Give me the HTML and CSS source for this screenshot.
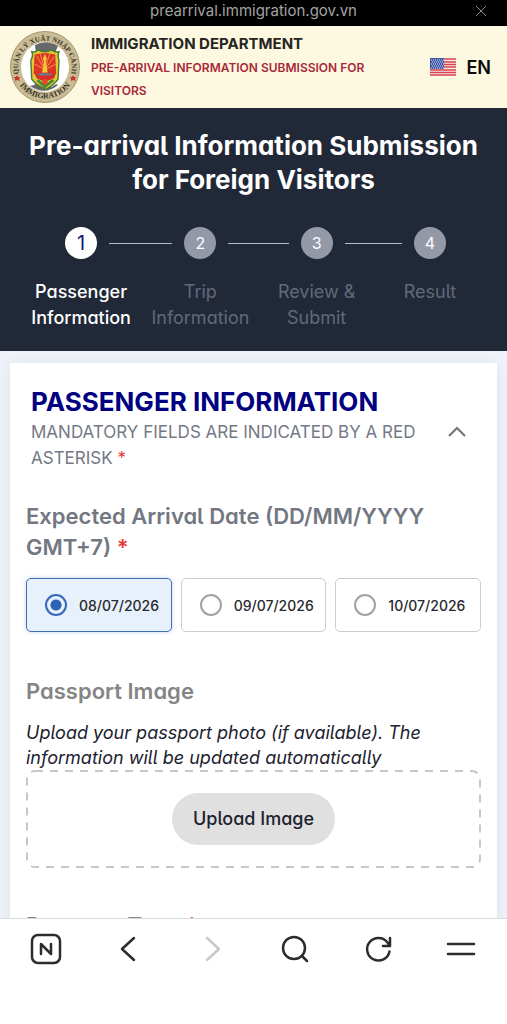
FILE: index.html
```
<!DOCTYPE html>
<html lang="en">
<head>
    <meta charset="UTF-8">
    <meta name="viewport" content="width=device-width, initial-scale=1.0">
    <title>Pre-arrival Information Submission</title>
    <link rel="stylesheet" href="styles.css">
</head>
<body>
    <div class="address-bar">
        <span class="address">prearrival.immigration.gov.vn</span>
        <button class="close" type="button" aria-label="Close">
            <svg width="12" height="12" viewBox="0 0 12 12"><path d="M1 1l10 10M11 1L1 11"/></svg>
        </button>
    </div>

    <div class="page">
        <header class="site-header">
            <svg class="logo" viewBox="0 0 70 72" role="img" aria-label="Immigration emblem">
                <defs>
                    <path id="arc-top" d="M10.500 48A27 27 0 1 1 59.500 48"/>
                    <path id="arc-bottom" d="M4.500 42A31 31 0 0 0 65.500 42"/>
                </defs>
                <ellipse cx="35" cy="36" rx="34.500" ry="35.500" fill="#c9bb93" stroke="#a3976f" stroke-width="1"/>
                <ellipse cx="35" cy="36" rx="24" ry="25" fill="#fff"/>
                <path d="M25 14Q36 8 48 15L44 24Q34 17 26 23z" fill="#66686b"/>
                <path d="M20 55Q27 54 29 48L42 56Q46 52 48 54Q35 65 20 55z" fill="#66686b"/>
                <g transform="translate(2 2) scale(.94)">
                    <path d="M21 20Q25 21 28 18Q35 22 42 18Q46 21 50 20Q48 25 50 29L49 49Q45 55 36 60Q25 55 21 49L20 29Q23 24 21 20z" fill="#e0cb32" stroke="#477b35" stroke-width="1.500"/>
                    <path d="M24 23L35 21L46 23L47 43Q42 47 35 48Q27 47 23 43z" fill="#dc3427"/>
                    <path d="M35 39L26 24M35 39L30 22M35 39V21M35 39L40 22M35 39L45 25M35 39L24 33M35 39L47 33" stroke="#f19a3d" stroke-width="1"/>
                    <path d="M35 23l2 4-1 4 2 11h-6l2-11-1-4z" fill="#f2c63b"/>
                    <path d="M24 42l6 3h11l6-3-2 6-10 4-9-4z" fill="#d92e28"/>
                    <path d="M28 44h14" stroke="#5486a0" stroke-width="2"/>
                    <path d="M27 50l8 7 9-7" fill="none" stroke="#4b873b" stroke-width="3"/>
                    <circle cx="35" cy="52" r="3" fill="#e24a2c"/>
                </g>
                <path d="M7 44l1 2h2l-1 2 1 2-3-1-2 1v-2l-1-2h2zM63 44l1 2h2l-1 2 1 2-3-1-2 1v-2l-1-2h2z" fill="#c9352c"/>
                <text class="logo-text"><textPath href="#arc-top" startOffset="50%">QUẢN LÝ XUẤT NHẬP CẢNH</textPath></text>
                <text class="logo-text logo-text-bottom"><textPath href="#arc-bottom" startOffset="50%">IMMIGRATION</textPath></text>
            </svg>
            <div class="site-name">
                <strong>IMMIGRATION DEPARTMENT</strong>
                <span>PRE-ARRIVAL INFORMATION SUBMISSION FOR VISITORS</span>
            </div>
            <button class="language" type="button">
                <svg width="26" height="18" viewBox="0 0 26 18">
                    <path fill="#f5eded" d="M0 0h26v18H0z"/>
                    <path d="M0 1h26M0 4h26M0 6.500h26M0 9h26M0 12h26M0 14.500h26M0 17h26" stroke="#d9424c" stroke-width="1.500"/>
                    <path fill="#4058a8" d="M0 0h14v11H0z"/>
                    <path d="M1 2h13M2 4h12M1 6h13M2 8h12M1 10h13" stroke="#d8dff2" stroke-width="1" stroke-dasharray="1 1"/>
                </svg>
                EN
            </button>
        </header>

        <section class="hero">
            <h1>Pre-arrival Information Submission for Foreign Visitors</h1>
            <ol class="steps">
                <li class="step active"><div class="marker"><span class="number">1</span></div>Passenger Information</li>
                <li class="step"><div class="marker"><span class="number">2</span></div>Trip Information</li>
                <li class="step"><div class="marker"><span class="number">3</span></div>Review &amp; Submit</li>
                <li class="step"><div class="marker"><span class="number">4</span></div>Result</li>
            </ol>
        </section>

        <main class="card">
            <div class="card-header">
                <div>
                    <h2>PASSENGER INFORMATION</h2>
                    <p>MANDATORY FIELDS ARE INDICATED BY A RED ASTERISK <span class="required">*</span></p>
                </div>
                <button class="toggle" type="button" aria-label="Collapse section">
                    <svg width="18" height="12" viewBox="0 0 18 12"><path d="M1 10l8-8 8 8"/></svg>
                </button>
            </div>

            <fieldset class="dates">
                <legend>Expected Arrival Date (DD/MM/YYYY GMT+7) <span class="required">*</span></legend>
                <div class="date-list">
                    <label class="date"><input type="radio" name="arrival" checked>08/07/2026</label>
                    <label class="date"><input type="radio" name="arrival">09/07/2026</label>
                    <label class="date"><input type="radio" name="arrival">10/07/2026</label>
                </div>
            </fieldset>

            <section class="passport">
                <h3>Passport Image</h3>
                <p>Upload your passport photo (if available). The information will be updated automatically</p>
                <div class="dropzone">
                    <svg class="dropzone-border" aria-hidden="true"><rect x="1" y="1" rx="8"/></svg>
                    <button class="upload" type="button">Upload Image</button>
                </div>
            </section>

            <h3>Passport Type <span class="required">*</span></h3>
        </main>
    </div>

    <nav class="toolbar">
        <button type="button" aria-label="Home">
            <svg viewBox="0 0 32 32"><rect x="2" y="2" width="28" height="28" rx="6"/><path d="M11 21V11l10 10V11"/></svg>
        </button>
        <button type="button" aria-label="Back">
            <svg viewBox="0 0 32 32"><path d="M21 5L9 16l12 11"/></svg>
        </button>
        <button type="button" aria-label="Forward" disabled>
            <svg viewBox="0 0 32 32"><path d="M11 5l12 11-12 11"/></svg>
        </button>
        <button type="button" aria-label="Search">
            <svg viewBox="0 0 32 32"><circle cx="15" cy="15" r="11"/><path d="M23 23l5 5"/></svg>
        </button>
        <button type="button" aria-label="Reload">
            <svg viewBox="0 0 32 32"><path d="M27.500 18.500A11.300 11.300 0 1 1 25.500 9.500L28 13M28 5v8h-7"/></svg>
        </button>
        <button type="button" aria-label="Menu">
            <svg viewBox="0 0 32 32"><path d="M3 11h26M3 21h26"/></svg>
        </button>
    </nav>
</body>
</html>
```
FILE: styles.css
```
* {
    box-sizing: border-box;
}
body {
    display: flex;
    flex-direction: column;
    height: 100vh;
    margin: 0;
    background-color: #fff;
    color: #1c2230;
    font-family: Inter, 'Liberation Sans', sans-serif;
}
h1, h2, h3, p {
    margin: 0;
}
button {
    padding: 0;
    border: none;
    background: none;
    color: inherit;
    font-family: inherit;
    cursor: pointer;
}
svg {
    display: block;
    flex: none;
}
.required {
    color: #e53935;
}

.address-bar {
    display: grid;
    grid-template-columns: 1fr auto 1fr;
    align-items: center;
    flex: none;
    height: 26px;
    padding: 0 20px 5px;
    background-color: #000;
    color: #a3a3a3;
    font-size: 15px;
    line-height: 20px;
}
.address {
    grid-column: 2;
}
.close {
    justify-self: end;
}
.close svg {
    fill: none;
    stroke: #909090;
    stroke-width: 1;
}

.page {
    flex: 1;
    min-height: 0;
    overflow-y: auto;
    scrollbar-width: none;
    background-color: #eff3f9;
    font-feature-settings: "cv11", "cv05";
}
.site-header {
    display: flex;
    align-items: center;
    padding: 4px 16px 4px 10px;
    background-color: #fdf8e0;
    font-feature-settings: normal;
}
.logo {
    width: 70px;
    height: 74px;
}
.logo-text {
    fill: #39352a;
    font-family: 'Liberation Serif', serif;
    font-size: 7px;
    font-weight: bold;
    text-anchor: middle;
}
.logo-text-bottom {
    font-size: 8px;
}
.site-name {
    flex: 1;
    margin-left: 11px;
}
.site-name strong {
    display: block;
    color: #26251f;
    font-size: 15px;
    font-weight: 700;
    line-height: 24px;
}
.site-name span {
    display: block;
    max-width: 290px;
    color: #a8283a;
    font-size: 12px;
    font-weight: 600;
    line-height: 23px;
}
.language {
    display: flex;
    align-items: center;
    gap: 10px;
    color: #0b0b0b;
    font-size: 18px;
    font-weight: 600;
}

.hero {
    padding: 21px 21px 20px;
    background-color: #212938;
    color: #fff;
}
.hero h1 {
    font-size: 26px;
    font-weight: 700;
    line-height: 34px;
    text-align: center;
}
.steps {
    display: grid;
    grid-template-columns: 120fr 118fr 114fr 112fr;
    margin: 30px 0 0;
    padding: 0;
    list-style: none;
}
.step {
    color: #60697a;
    font-size: 18px;
    line-height: 26px;
    text-align: center;
}
.marker {
    display: flex;
    align-items: center;
    gap: 12px;
    margin-bottom: 20px;
}
.marker::before,
.marker::after {
    content: "";
    flex: 1;
    height: 1px;
    background-color: #b4b9c4;
}
.step:first-child .marker::before,
.step:last-child .marker::after {
    visibility: hidden;
}
.number {
    width: 32px;
    height: 32px;
    border-radius: 50%;
    background-color: #9499a7;
    color: #fff;
    font-size: 16px;
    line-height: 32px;
}
.active {
    color: #fff;
    font-weight: 500;
}
.active .number {
    background-color: #fff;
    color: #15157d;
    font-size: 20px;
    font-weight: 400;
}

.card {
    margin: 12px 10px;
    padding: 22px 16px;
    background-color: #fff;
    box-shadow: 0 2px 12px rgba(40, 60, 100, 0.1);
}
.card-header {
    display: flex;
    align-items: center;
    justify-content: space-between;
    padding: 0 15px 0 5px;
}
.card-header h2 {
    color: #000080;
    font-size: 26px;
    line-height: 34px;
}
.card-header p {
    max-width: 400px;
    color: #747985;
    font-size: 17px;
    line-height: 26px;
}
.toggle {
    padding-top: 8px;
}
.toggle svg {
    fill: none;
    stroke: #6f727a;
    stroke-width: 2;
}
.dates {
    margin: 30px 0 0;
    padding: 0;
    border: none;
}
.dates legend {
    padding: 0;
    margin-bottom: 15px;
    color: #737781;
    font-size: 22px;
    font-weight: 600;
    line-height: 31px;
}
.date-list {
    display: grid;
    grid-template-columns: repeat(3, 1fr);
    gap: 9px;
}
.date {
    display: flex;
    align-items: center;
    gap: 12px;
    height: 54px;
    padding-left: 18px;
    border: 1px solid #cccccc;
    border-radius: 5px;
    color: #28292c;
    font-size: 14px;
    font-weight: 500;
    white-space: nowrap;
}
.date input {
    appearance: none;
    flex: none;
    width: 22px;
    height: 22px;
    margin: 0;
    border: 2px solid #a2a2a2;
    border-radius: 50%;
}
.date:has(input:checked) {
    border-color: #426db5;
    background-color: #e6f1fb;
    box-shadow: 0 0 4px rgba(50, 100, 190, 0.3);
}
.date input:checked {
    border-color: #3668b7;
    background: radial-gradient(circle, #2d62b8 5px, transparent 6px);
}

.card h3 {
    color: #858585;
    font-size: 22px;
    font-weight: 600;
    line-height: 30px;
}
.passport {
    margin: 44px 0 42px;
}
.passport p {
    margin-top: 14px;
    font-size: 18px;
    font-style: italic;
    line-height: 25px;
}
.dropzone {
    position: relative;
    display: flex;
    justify-content: center;
    padding: 23px;
}
.dropzone-border {
    position: absolute;
    inset: 0;
    width: 100%;
    height: 100%;
}
.dropzone-border rect {
    width: calc(100% - 2px);
    height: calc(100% - 2px);
    fill: none;
    stroke: #c7c7c7;
    stroke-width: 2;
    stroke-dasharray: 8 7;
}
.upload {
    position: relative;
    padding: 13px 21px;
    border-radius: 26px;
    background-color: #e0e0e0;
    font-size: 18px;
    font-weight: 500;
    line-height: 26px;
    font-feature-settings: inherit;
}

.toolbar {
    display: flex;
    justify-content: space-between;
    flex: none;
    height: 106px;
    padding: 14px 30px;
    border-top: 1px solid #d8dade;
    background-color: #fff;
}
.toolbar button {
    align-self: flex-start;
}
.toolbar svg {
    width: 32px;
    height: 32px;
    fill: none;
    stroke: #2c2c2e;
    stroke-width: 2.5;
    stroke-linecap: round;
    stroke-linejoin: round;
}
.toolbar button:disabled svg {
    stroke: #c8c8c8;
}
```
